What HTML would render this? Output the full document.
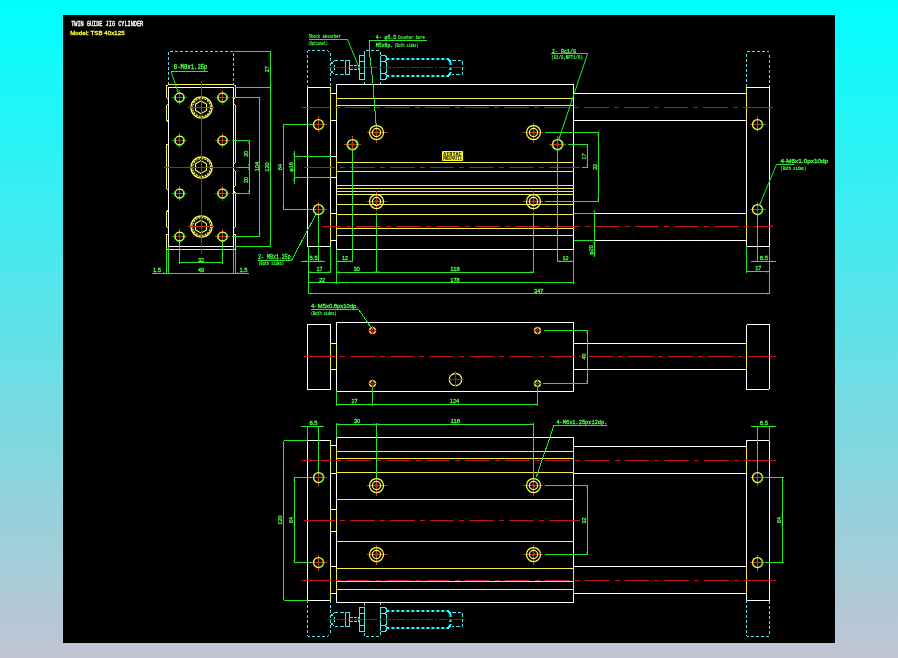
<!DOCTYPE html>
<html><head><meta charset="utf-8"><title>TWIN GUIDE JIG CYLINDER TSB 40x125</title>
<style>
html,body{margin:0;padding:0;}
body{width:898px;height:658px;overflow:hidden;background:linear-gradient(to bottom,#00ffff 0%,#c0c4d2 100%);position:relative;font-family:"Liberation Sans",sans-serif;}
#sheet{position:absolute;left:63px;top:15px;width:772px;height:628px;background:#000;}
svg{position:absolute;left:0;top:0;}
svg{will-change:transform;}
.k{shape-rendering:crispEdges;}
svg text{font-family:"Liberation Mono","Liberation Sans",monospace;}
svg text.n{font-family:"Liberation Sans",sans-serif;}
</style></head><body>
<div id="sheet"></div>
<svg width="898" height="658" viewBox="0 0 898 658">
<text x="71.2" y="26.0" fill="#ffffff" font-size="7.5" textLength="72.0" lengthAdjust="spacingAndGlyphs" stroke="#ffffff" stroke-width="0.4">TWIN GUIDE JIG CYLINDER</text>
<text x="70.2" y="35.0" fill="#ffff40" font-size="6.2" class="n" textLength="54.5" lengthAdjust="spacingAndGlyphs" stroke="#ffff40" stroke-width="0.3">Model: TSB 40x125</text>
<path class="k" d="M168.4 84.5 V51.3 H233.5 V84.5" fill="none" stroke="#58e4e4" stroke-width="1.0" stroke-dasharray="3 2"/>
<line x1="168.0" y1="84.5" x2="233.7" y2="84.5" stroke="#f0ee50" stroke-width="1.0" class="k"/>
<line x1="166.4" y1="249.5" x2="235.4" y2="249.5" stroke="#f0ee50" stroke-width="1.0" class="k"/>
<path class="k" d="M168.4 84.8 L166.4 86 V97.6 L168.4 98.8" fill="none" stroke="#f0ee50" stroke-width="1.0"/>
<path class="k" d="M168.4 104.1 L166.4 105.3 V120.3 L168.4 121.5" fill="none" stroke="#f0ee50" stroke-width="1.0"/>
<path class="k" d="M168.4 143.60000000000002 L166.4 144.8 V188.6 L168.4 189.79999999999998" fill="none" stroke="#f0ee50" stroke-width="1.0"/>
<path class="k" d="M168.4 210.4 L166.4 211.6 V226.6 L168.4 227.79999999999998" fill="none" stroke="#f0ee50" stroke-width="1.0"/>
<path class="k" d="M168.4 233.60000000000002 L166.4 234.8 V249.5" fill="none" stroke="#f0ee50" stroke-width="1.0"/>
<path class="k" d="M233.5 84.8 L235.4 86 V97.6 L233.5 98.8" fill="none" stroke="#f0ee50" stroke-width="1.0"/>
<path class="k" d="M233.5 104.1 L235.4 105.3 V162.8 L233.5 164.0" fill="none" stroke="#f0ee50" stroke-width="1.0"/>
<path class="k" d="M233.5 170.0 L235.4 171.2 V185.7 L233.5 186.89999999999998" fill="none" stroke="#f0ee50" stroke-width="1.0"/>
<path class="k" d="M233.5 191.3 L235.4 192.5 V226.6 L233.5 227.79999999999998" fill="none" stroke="#f0ee50" stroke-width="1.0"/>
<path class="k" d="M233.5 233.60000000000002 L235.4 234.8 V249.5" fill="none" stroke="#f0ee50" stroke-width="1.0"/>
<rect class="k" x="168.5" y="87.5" width="65.0" height="159.0" fill="none" stroke="#ffffff" stroke-width="1.0"/>
<line x1="201.5" y1="80.6" x2="201.5" y2="254.0" stroke="#c01420" stroke-width="1.0" class="k"/>
<line x1="164.0" y1="167.5" x2="238.0" y2="167.5" stroke="#c01420" stroke-width="1.0" class="k"/>
<line x1="172.0" y1="97.5" x2="187.0" y2="97.5" stroke="#b04a14" stroke-width="1.0" class="k"/>
<line x1="179.5" y1="90.0" x2="179.5" y2="105.0" stroke="#b04a14" stroke-width="1.0" class="k"/>
<circle cx="179.5" cy="97.5" r="4.4" fill="none" stroke="#ffff58" stroke-width="1.25"/>
<path d="M182.05 93.08 A5.1 5.1 0 1 1 175.08 94.95" fill="none" stroke="#28e628" stroke-width="1.0"/>
<line x1="215.0" y1="97.5" x2="230.0" y2="97.5" stroke="#b04a14" stroke-width="1.0" class="k"/>
<line x1="222.5" y1="90.0" x2="222.5" y2="105.0" stroke="#b04a14" stroke-width="1.0" class="k"/>
<circle cx="222.5" cy="97.5" r="4.4" fill="none" stroke="#ffff58" stroke-width="1.25"/>
<path d="M225.05 93.08 A5.1 5.1 0 1 1 218.08 94.95" fill="none" stroke="#28e628" stroke-width="1.0"/>
<line x1="172.0" y1="140.5" x2="187.0" y2="140.5" stroke="#b04a14" stroke-width="1.0" class="k"/>
<line x1="179.5" y1="132.9" x2="179.5" y2="147.9" stroke="#b04a14" stroke-width="1.0" class="k"/>
<circle cx="179.5" cy="140.5" r="4.4" fill="none" stroke="#ffff58" stroke-width="1.25"/>
<path d="M182.05 136.08 A5.1 5.1 0 1 1 175.08 137.95" fill="none" stroke="#28e628" stroke-width="1.0"/>
<line x1="215.0" y1="140.5" x2="230.0" y2="140.5" stroke="#b04a14" stroke-width="1.0" class="k"/>
<line x1="222.5" y1="132.9" x2="222.5" y2="147.9" stroke="#b04a14" stroke-width="1.0" class="k"/>
<circle cx="222.5" cy="140.5" r="4.4" fill="none" stroke="#ffff58" stroke-width="1.25"/>
<path d="M225.05 136.08 A5.1 5.1 0 1 1 218.08 137.95" fill="none" stroke="#28e628" stroke-width="1.0"/>
<line x1="172.0" y1="193.5" x2="187.0" y2="193.5" stroke="#b04a14" stroke-width="1.0" class="k"/>
<line x1="179.5" y1="186.1" x2="179.5" y2="201.1" stroke="#b04a14" stroke-width="1.0" class="k"/>
<circle cx="179.5" cy="193.5" r="4.4" fill="none" stroke="#ffff58" stroke-width="1.25"/>
<path d="M182.05 189.08 A5.1 5.1 0 1 1 175.08 190.95" fill="none" stroke="#28e628" stroke-width="1.0"/>
<line x1="215.0" y1="193.5" x2="230.0" y2="193.5" stroke="#b04a14" stroke-width="1.0" class="k"/>
<line x1="222.5" y1="186.1" x2="222.5" y2="201.1" stroke="#b04a14" stroke-width="1.0" class="k"/>
<circle cx="222.5" cy="193.5" r="4.4" fill="none" stroke="#ffff58" stroke-width="1.25"/>
<path d="M225.05 189.08 A5.1 5.1 0 1 1 218.08 190.95" fill="none" stroke="#28e628" stroke-width="1.0"/>
<line x1="172.0" y1="236.5" x2="187.0" y2="236.5" stroke="#b04a14" stroke-width="1.0" class="k"/>
<line x1="179.5" y1="229.0" x2="179.5" y2="244.0" stroke="#b04a14" stroke-width="1.0" class="k"/>
<circle cx="179.5" cy="236.5" r="4.4" fill="none" stroke="#ffff58" stroke-width="1.25"/>
<path d="M182.05 232.08 A5.1 5.1 0 1 1 175.08 233.95" fill="none" stroke="#28e628" stroke-width="1.0"/>
<line x1="215.0" y1="236.5" x2="230.0" y2="236.5" stroke="#b04a14" stroke-width="1.0" class="k"/>
<line x1="222.5" y1="229.0" x2="222.5" y2="244.0" stroke="#b04a14" stroke-width="1.0" class="k"/>
<circle cx="222.5" cy="236.5" r="4.4" fill="none" stroke="#ffff58" stroke-width="1.25"/>
<path d="M225.05 232.08 A5.1 5.1 0 1 1 218.08 233.95" fill="none" stroke="#28e628" stroke-width="1.0"/>
<circle cx="201.5" cy="107.5" r="10.6" fill="none" stroke="#ffff58" stroke-width="1.25"/>
<circle cx="201.5" cy="107.5" r="9.0" fill="none" stroke="#ffff58" stroke-width="1.25" stroke-dasharray="2 1"/>
<polygon points="201.0,113.7 195.5,110.5 195.5,104.1 201.0,100.9 206.5,104.1 206.5,110.5" fill="none" stroke="#ffff58" stroke-width="1.1"/>
<line x1="188.0" y1="107.5" x2="214.0" y2="107.5" stroke="#b83018" stroke-width="1.0" class="k"/>
<line x1="201.5" y1="94.3" x2="201.5" y2="120.3" stroke="#b83018" stroke-width="1.0" class="k"/>
<circle cx="201.5" cy="167.5" r="10.6" fill="none" stroke="#ffff58" stroke-width="1.25"/>
<circle cx="201.5" cy="167.5" r="9.0" fill="none" stroke="#ffff58" stroke-width="1.25" stroke-dasharray="2 1"/>
<polygon points="201.0,173.4 195.5,170.2 195.5,163.8 201.0,160.6 206.5,163.8 206.5,170.2" fill="none" stroke="#ffff58" stroke-width="1.1"/>
<line x1="188.0" y1="167.5" x2="214.0" y2="167.5" stroke="#b83018" stroke-width="1.0" class="k"/>
<line x1="201.5" y1="154.0" x2="201.5" y2="180.0" stroke="#b83018" stroke-width="1.0" class="k"/>
<circle cx="201.5" cy="226.5" r="10.6" fill="none" stroke="#ffff58" stroke-width="1.25"/>
<circle cx="201.5" cy="226.5" r="9.0" fill="none" stroke="#ffff58" stroke-width="1.25" stroke-dasharray="2 1"/>
<polygon points="201.0,233.1 195.5,229.9 195.5,223.5 201.0,220.3 206.5,223.5 206.5,229.9" fill="none" stroke="#ffff58" stroke-width="1.1"/>
<line x1="188.0" y1="226.5" x2="214.0" y2="226.5" stroke="#b83018" stroke-width="1.0" class="k"/>
<line x1="201.5" y1="213.7" x2="201.5" y2="239.7" stroke="#b83018" stroke-width="1.0" class="k"/>
<text x="173.8" y="69.4" fill="#48ff48" font-size="6.8" textLength="33.7" lengthAdjust="spacingAndGlyphs" stroke="#48ff48" stroke-width="0.3">8-M8x1.25p</text>
<line x1="171.0" y1="71.5" x2="207.8" y2="71.5" stroke="#28e628" stroke-width="1.0" class="k"/>
<line x1="171.0" y1="71.4" x2="178.2" y2="92.5" stroke="#28e628" stroke-width="1.0"/>
<polygon points="178.2,92.5 176.4,90.0 178.1,89.4" fill="#28e628"/>
<line x1="233.5" y1="51.5" x2="271.0" y2="51.5" stroke="#28e628" stroke-width="1.0" class="k"/>
<line x1="235.0" y1="87.5" x2="271.0" y2="87.5" stroke="#28e628" stroke-width="1.0" class="k"/>
<line x1="235.0" y1="246.5" x2="271.0" y2="246.5" stroke="#28e628" stroke-width="1.0" class="k"/>
<line x1="270.5" y1="51.3" x2="270.5" y2="87.2" stroke="#28e628" stroke-width="1.0" class="k"/>
<polygon points="270.5,51.3 271.4,54.3 269.6,54.3" fill="#28e628"/>
<polygon points="270.5,87.2 269.6,84.2 271.4,84.2" fill="#28e628"/>
<text x="269.3" y="69.2" fill="#48ff48" font-size="6.1" class="n" text-anchor="middle" textLength="6.1" lengthAdjust="spacingAndGlyphs" transform="rotate(-90 269.3 69.2)" stroke="#48ff48" stroke-width="0.3">27</text>
<line x1="270.5" y1="87.2" x2="270.5" y2="246.4" stroke="#28e628" stroke-width="1.0" class="k"/>
<polygon points="270.5,87.2 271.4,90.2 269.6,90.2" fill="#28e628"/>
<polygon points="270.5,246.4 269.6,243.4 271.4,243.4" fill="#28e628"/>
<text x="268.6" y="167.0" fill="#48ff48" font-size="6.1" class="n" text-anchor="middle" textLength="9.4" lengthAdjust="spacingAndGlyphs" transform="rotate(-90 268.6 167.0)" stroke="#48ff48" stroke-width="0.3">120</text>
<line x1="231.5" y1="97.5" x2="259.6" y2="97.5" stroke="#28e628" stroke-width="1.0" class="k"/>
<line x1="231.5" y1="236.5" x2="259.6" y2="236.5" stroke="#28e628" stroke-width="1.0" class="k"/>
<line x1="259.5" y1="97.5" x2="259.5" y2="236.5" stroke="#28e628" stroke-width="1.0" class="k"/>
<polygon points="259.6,97.5 260.5,100.5 258.7,100.5" fill="#28e628"/>
<polygon points="259.6,236.5 258.7,233.5 260.5,233.5" fill="#28e628"/>
<text x="259.0" y="166.5" fill="#48ff48" font-size="6.1" class="n" text-anchor="middle" textLength="9.4" lengthAdjust="spacingAndGlyphs" transform="rotate(-90 259.0 166.5)" stroke="#48ff48" stroke-width="0.3">104</text>
<line x1="231.5" y1="140.5" x2="249.0" y2="140.5" stroke="#28e628" stroke-width="1.0" class="k"/>
<line x1="231.5" y1="193.5" x2="249.0" y2="193.5" stroke="#28e628" stroke-width="1.0" class="k"/>
<line x1="238.0" y1="167.5" x2="249.6" y2="167.5" stroke="#28e628" stroke-width="1.0" class="k"/>
<line x1="249.5" y1="140.4" x2="249.5" y2="193.6" stroke="#28e628" stroke-width="1.0" class="k"/>
<polygon points="249.0,140.4 249.9,143.4 248.1,143.4" fill="#28e628"/>
<polygon points="249.0,167.0 248.1,164.0 249.9,164.0" fill="#28e628"/>
<polygon points="249.0,167.0 249.9,170.0 248.1,170.0" fill="#28e628"/>
<polygon points="249.0,193.6 248.1,190.6 249.9,190.6" fill="#28e628"/>
<text x="247.6" y="153.8" fill="#48ff48" font-size="6.1" class="n" text-anchor="middle" textLength="6.1" lengthAdjust="spacingAndGlyphs" transform="rotate(-90 247.6 153.8)" stroke="#48ff48" stroke-width="0.3">20</text>
<text x="247.6" y="180.0" fill="#48ff48" font-size="6.1" class="n" text-anchor="middle" textLength="6.1" lengthAdjust="spacingAndGlyphs" transform="rotate(-90 247.6 180.0)" stroke="#48ff48" stroke-width="0.3">20</text>
<line x1="166.5" y1="250.0" x2="166.5" y2="274.0" stroke="#28e628" stroke-width="1.0" class="k"/>
<line x1="168.5" y1="247.0" x2="168.5" y2="274.0" stroke="#28e628" stroke-width="1.0" class="k"/>
<line x1="233.5" y1="247.0" x2="233.5" y2="274.0" stroke="#28e628" stroke-width="1.0" class="k"/>
<line x1="235.5" y1="250.0" x2="235.5" y2="274.0" stroke="#28e628" stroke-width="1.0" class="k"/>
<line x1="152.0" y1="273.5" x2="249.0" y2="273.5" stroke="#28e628" stroke-width="1.0" class="k"/>
<polygon points="166.4,273.2 163.4,274.1 163.4,272.3" fill="#28e628"/>
<polygon points="235.4,273.2 238.4,272.3 238.4,274.1" fill="#28e628"/>
<text x="157.0" y="271.8" fill="#48ff48" font-size="6.1" class="n" text-anchor="middle" textLength="8.2" lengthAdjust="spacingAndGlyphs" stroke="#48ff48" stroke-width="0.3">1.5</text>
<text x="201.0" y="271.8" fill="#48ff48" font-size="6.1" class="n" text-anchor="middle" textLength="6.1" lengthAdjust="spacingAndGlyphs" stroke="#48ff48" stroke-width="0.3">49</text>
<text x="243.5" y="271.8" fill="#48ff48" font-size="6.1" class="n" text-anchor="middle" textLength="8.2" lengthAdjust="spacingAndGlyphs" stroke="#48ff48" stroke-width="0.3">1.5</text>
<line x1="179.5" y1="242.0" x2="179.5" y2="263.5" stroke="#28e628" stroke-width="1.0" class="k"/>
<line x1="222.5" y1="242.0" x2="222.5" y2="263.5" stroke="#28e628" stroke-width="1.0" class="k"/>
<line x1="179.5" y1="262.5" x2="222.5" y2="262.5" stroke="#28e628" stroke-width="1.0" class="k"/>
<polygon points="179.5,262.7 182.5,261.8 182.5,263.6" fill="#28e628"/>
<polygon points="222.5,262.7 219.5,263.6 219.5,261.8" fill="#28e628"/>
<text x="201.0" y="261.5" fill="#48ff48" font-size="6.1" class="n" text-anchor="middle" textLength="6.1" lengthAdjust="spacingAndGlyphs" stroke="#48ff48" stroke-width="0.3">32</text>
<rect class="k" x="307.5" y="87.5" width="23.0" height="159.0" fill="none" stroke="#ffffff" stroke-width="1.0"/>
<line x1="330.5" y1="88.0" x2="330.5" y2="246.0" stroke="#f0ee50" stroke-width="1.0" class="k"/>
<rect class="k" x="336.5" y="84.5" width="237.0" height="165.0" fill="none" stroke="#ffffff" stroke-width="1.0"/>
<line x1="336.5" y1="94.0" x2="336.5" y2="240.0" stroke="#f0ee50" stroke-width="1.0" class="k"/>
<line x1="336.5" y1="98.5" x2="573.5" y2="98.5" stroke="#f0ee50" stroke-width="1.0" class="k"/>
<line x1="336.5" y1="105.5" x2="573.5" y2="105.5" stroke="#f0ee50" stroke-width="1.0" class="k"/>
<line x1="336.5" y1="162.5" x2="573.5" y2="162.5" stroke="#f0ee50" stroke-width="1.0" class="k"/>
<line x1="336.5" y1="171.5" x2="573.5" y2="171.5" stroke="#f0ee50" stroke-width="1.0" class="k"/>
<line x1="336.5" y1="185.5" x2="573.5" y2="185.5" stroke="#f0ee50" stroke-width="1.0" class="k"/>
<line x1="336.5" y1="188.5" x2="573.5" y2="188.5" stroke="#f0ee50" stroke-width="1.0" class="k"/>
<line x1="336.5" y1="191.5" x2="573.5" y2="191.5" stroke="#f0ee50" stroke-width="1.0" class="k"/>
<line x1="336.5" y1="194.5" x2="573.5" y2="194.5" stroke="#f0ee50" stroke-width="1.0" class="k"/>
<line x1="336.5" y1="204.5" x2="573.5" y2="204.5" stroke="#f0ee50" stroke-width="1.0" class="k"/>
<line x1="336.5" y1="214.5" x2="573.5" y2="214.5" stroke="#f0ee50" stroke-width="1.0" class="k"/>
<line x1="336.5" y1="228.5" x2="573.5" y2="228.5" stroke="#f0ee50" stroke-width="1.0" class="k"/>
<line x1="336.5" y1="235.5" x2="573.5" y2="235.5" stroke="#f0ee50" stroke-width="1.0" class="k"/>
<rect class="k" x="330.5" y="120.5" width="6.0" height="36.0" fill="none" stroke="#ffffff" stroke-width="1.0"/>
<rect class="k" x="330.5" y="177.5" width="6.0" height="36.0" fill="none" stroke="#ffffff" stroke-width="1.0"/>
<line x1="330.6" y1="93.5" x2="336.5" y2="93.5" stroke="#ffffff" stroke-width="1.0" class="k"/>
<line x1="330.6" y1="240.5" x2="336.5" y2="240.5" stroke="#ffffff" stroke-width="1.0" class="k"/>
<line x1="573.5" y1="93.5" x2="746.4" y2="93.5" stroke="#ffffff" stroke-width="1.0" class="k"/>
<line x1="573.5" y1="120.5" x2="746.4" y2="120.5" stroke="#ffffff" stroke-width="1.0" class="k"/>
<line x1="573.5" y1="213.5" x2="746.4" y2="213.5" stroke="#ffffff" stroke-width="1.0" class="k"/>
<line x1="573.5" y1="240.5" x2="746.4" y2="240.5" stroke="#ffffff" stroke-width="1.0" class="k"/>
<rect class="k" x="746.5" y="87.5" width="23.0" height="159.0" fill="none" stroke="#ffffff" stroke-width="1.0"/>
<line x1="746.5" y1="88.0" x2="746.5" y2="120.4" stroke="#f0ee50" stroke-width="1.0" class="k"/>
<line x1="746.5" y1="213.5" x2="746.5" y2="240.4" stroke="#f0ee50" stroke-width="1.0" class="k"/>
<path class="k" d="M307.6 87.5 V52.5 Q307.6 50.5 309.6 50.5 H327.6 L330.6 53.5 V87.5" fill="none" stroke="#58e4e4" stroke-width="1.0" stroke-dasharray="3 2"/>
<path class="k" d="M746.4 87.2 V53.4 Q746.4 51.4 748.4 51.4 H767.8 Q769.8 51.4 769.8 53.4 V87.2" fill="none" stroke="#58e4e4" stroke-width="1.0" stroke-dasharray="3 2"/>
<path class="k" d="M301 107.5 H330 M335 107.5 H340 M345 107.5 H370 M375 107.5 H380 M385 107.5 H410 M415 107.5 H420 M425 107.5 H450 M455 107.5 H460 M465 107.5 H489 M494 107.5 H499 M504 107.5 H529 M534 107.5 H539 M544 107.5 H569 M574 107.5 H579 M584 107.5 H609 M614 107.5 H619 M624 107.5 H649 M654 107.5 H659 M664 107.5 H688 M693 107.5 H698 M703 107.5 H728 M733 107.5 H738 M743 107.5 H773" stroke="#c01420" stroke-width="1" fill="none"/>
<path class="k" d="M304 167.5 H335 M340 167.5 H345 M350 167.5 H375 M380 167.5 H385 M390 167.5 H415 M420 167.5 H425 M430 167.5 H454 M459 167.5 H464 M469 167.5 H494 M499 167.5 H504 M509 167.5 H534 M539 167.5 H544 M549 167.5 H580" stroke="#c01420" stroke-width="1" fill="none"/>
<path class="k" d="M322 226.5 H341 M346 226.5 H351 M356 226.5 H381 M386 226.5 H391 M396 226.5 H421 M426 226.5 H431 M436 226.5 H460 M465 226.5 H470 M475 226.5 H500 M505 226.5 H510 M515 226.5 H540 M545 226.5 H550 M555 226.5 H580 M585 226.5 H590 M595 226.5 H620 M625 226.5 H630 M635 226.5 H659 M664 226.5 H669 M674 226.5 H699 M704 226.5 H709 M714 226.5 H739 M744 226.5 H749 M754 226.5 H773" stroke="#c01420" stroke-width="1" fill="none"/>
<path class="k" d="M364.5 84.5 V51.9 L366 50.4 H379 L380.5 51.9 V84.5" fill="none" stroke="#58e4e4" stroke-width="1.0" stroke-dasharray="3 2"/>
<line x1="334.5" y1="60.5" x2="345.7" y2="60.5" stroke="#58e4e4" stroke-width="1.0" stroke-dasharray="3.5 2" class="k"/>
<line x1="334.5" y1="74.5" x2="345.7" y2="74.5" stroke="#58e4e4" stroke-width="1.0" stroke-dasharray="3.5 2" class="k"/>
<path class="k" d="M334.5 60.5 L331 64.0 M334.5 74.5 L331 71.0 M331 62.0 L333 64.0 M331 73.0 L333 71.0" fill="none" stroke="#58e4e4" stroke-width="1.0"/>
<line x1="334.5" y1="65.0" x2="334.5" y2="70.0" stroke="#58e4e4" stroke-width="1.0" class="k"/>
<rect class="k" x="345.5" y="60.5" width="4.0" height="14.0" fill="none" stroke="#58e4e4" stroke-width="1.0"/>
<line x1="349.8" y1="65.5" x2="358.2" y2="65.5" stroke="#58e4e4" stroke-width="1.0" stroke-dasharray="3 1.5" class="k"/>
<line x1="349.8" y1="69.5" x2="358.2" y2="69.5" stroke="#58e4e4" stroke-width="1.0" stroke-dasharray="3 1.5" class="k"/>
<rect class="k" x="359.5" y="55.5" width="5.0" height="24.0" fill="none" stroke="#58e4e4" stroke-width="1.0"/>
<line x1="359.5" y1="61.5" x2="364.9" y2="61.5" stroke="#58e4e4" stroke-width="1.0" class="k"/>
<line x1="359.5" y1="73.5" x2="364.9" y2="73.5" stroke="#58e4e4" stroke-width="1.0" class="k"/>
<path class="k" d="M359.5 64.5 L357.8 67.5 L359.5 70.5" fill="none" stroke="#58e4e4" stroke-width="1.0"/>
<path class="k" d="M385.0 55.5 H381.5 L380.5 56.5 V78.5 L381.5 79.5 H385.0 L386 78.5 V74.5 L385 73.5 L386.6 72.0 V69.0 L385.4 67.5 L386.6 66.0 V63.0 L385 61.5 L386 60.5 V56.5 Z M380.5 61.5 H385 M380.5 73.5 H385" fill="none" stroke="#58e4e4" stroke-width="1.0"/>
<line x1="386.4" y1="59.0" x2="449" y2="59.0" stroke="#20ffff" stroke-width="2" stroke-dasharray="3 2"/>
<line x1="386.4" y1="76.0" x2="449" y2="76.0" stroke="#20ffff" stroke-width="2" stroke-dasharray="3 2"/>
<path class="k" d="M448.2 59.1 L450.6 61.5 M448.2 75.9 L450.6 73.5" fill="none" stroke="#20ffff" stroke-width="1.6"/>
<line x1="450.5" y1="62.0" x2="450.5" y2="73.0" stroke="#20ffff" stroke-width="2" stroke-dasharray="3 2"/>
<path class="k" d="M452 60.5 H462.5 V74.5 H452" fill="none" stroke="#58e4e4" stroke-width="1.0" stroke-dasharray="3.5 2"/>
<line x1="326.7" y1="67.5" x2="466.0" y2="67.5" stroke="#9c1420" stroke-width="1.0" stroke-dasharray="8 2 2 2" class="k"/>
<line x1="366.6" y1="132.5" x2="386.6" y2="132.5" stroke="#b04a14" stroke-width="1.0" class="k"/>
<line x1="376.5" y1="122.6" x2="376.5" y2="142.6" stroke="#b04a14" stroke-width="1.0" class="k"/>
<circle cx="376.5" cy="132.5" r="7.0" fill="none" stroke="#ffff58" stroke-width="1.25"/>
<circle cx="376.5" cy="132.5" r="4.1" fill="none" stroke="#ffff58" stroke-width="1.25"/>
<circle cx="376.5" cy="132.5" r="1.1" fill="none" stroke="#d81828" stroke-width="1.1"/>
<line x1="366.6" y1="201.5" x2="386.6" y2="201.5" stroke="#b04a14" stroke-width="1.0" class="k"/>
<line x1="376.5" y1="191.3" x2="376.5" y2="211.3" stroke="#b04a14" stroke-width="1.0" class="k"/>
<circle cx="376.5" cy="201.5" r="7.0" fill="none" stroke="#ffff58" stroke-width="1.25"/>
<circle cx="376.5" cy="201.5" r="4.1" fill="none" stroke="#ffff58" stroke-width="1.25"/>
<circle cx="376.5" cy="201.5" r="1.1" fill="none" stroke="#d81828" stroke-width="1.1"/>
<line x1="523.4" y1="132.5" x2="543.4" y2="132.5" stroke="#b04a14" stroke-width="1.0" class="k"/>
<line x1="533.5" y1="122.6" x2="533.5" y2="142.6" stroke="#b04a14" stroke-width="1.0" class="k"/>
<circle cx="533.5" cy="132.5" r="7.0" fill="none" stroke="#ffff58" stroke-width="1.25"/>
<circle cx="533.5" cy="132.5" r="4.1" fill="none" stroke="#ffff58" stroke-width="1.25"/>
<circle cx="533.5" cy="132.5" r="1.1" fill="none" stroke="#d81828" stroke-width="1.1"/>
<line x1="523.4" y1="201.5" x2="543.4" y2="201.5" stroke="#b04a14" stroke-width="1.0" class="k"/>
<line x1="533.5" y1="191.3" x2="533.5" y2="211.3" stroke="#b04a14" stroke-width="1.0" class="k"/>
<circle cx="533.5" cy="201.5" r="7.0" fill="none" stroke="#ffff58" stroke-width="1.25"/>
<circle cx="533.5" cy="201.5" r="4.1" fill="none" stroke="#ffff58" stroke-width="1.25"/>
<circle cx="533.5" cy="201.5" r="1.1" fill="none" stroke="#d81828" stroke-width="1.1"/>
<line x1="344.2" y1="144.5" x2="361.4" y2="144.5" stroke="#b04a14" stroke-width="1.0" class="k"/>
<line x1="352.5" y1="136.0" x2="352.5" y2="153.2" stroke="#b04a14" stroke-width="1.0" class="k"/>
<circle cx="352.5" cy="144.5" r="5.0" fill="none" stroke="#ffff58" stroke-width="1.25"/>
<path d="M355.30 139.65 A5.6 5.6 0 1 1 346.99 143.53" fill="none" stroke="#28e628" stroke-width="1.0"/>
<circle cx="352.5" cy="144.5" r="1.1" fill="none" stroke="#d81828" stroke-width="1.1"/>
<line x1="548.9" y1="144.5" x2="566.1" y2="144.5" stroke="#b04a14" stroke-width="1.0" class="k"/>
<line x1="557.5" y1="136.0" x2="557.5" y2="153.2" stroke="#b04a14" stroke-width="1.0" class="k"/>
<circle cx="557.5" cy="144.5" r="5.0" fill="none" stroke="#ffff58" stroke-width="1.25"/>
<path d="M560.30 139.65 A5.6 5.6 0 1 1 551.99 143.53" fill="none" stroke="#28e628" stroke-width="1.0"/>
<circle cx="557.5" cy="144.5" r="1.1" fill="none" stroke="#d81828" stroke-width="1.1"/>
<line x1="310.7" y1="124.5" x2="326.7" y2="124.5" stroke="#b04a14" stroke-width="1.0" class="k"/>
<line x1="318.5" y1="116.2" x2="318.5" y2="132.2" stroke="#b04a14" stroke-width="1.0" class="k"/>
<circle cx="318.5" cy="124.5" r="5.0" fill="none" stroke="#ffff58" stroke-width="1.25"/>
<path d="M323.26 121.75 A5.5 5.5 0 0 1 319.46 129.92" fill="none" stroke="#30d830" stroke-width="1"/>
<line x1="749.7" y1="124.5" x2="765.7" y2="124.5" stroke="#b04a14" stroke-width="1.0" class="k"/>
<line x1="757.5" y1="116.2" x2="757.5" y2="132.2" stroke="#b04a14" stroke-width="1.0" class="k"/>
<circle cx="757.5" cy="124.5" r="5.0" fill="none" stroke="#ffff58" stroke-width="1.25"/>
<path d="M762.26 121.75 A5.5 5.5 0 0 1 758.46 129.92" fill="none" stroke="#30d830" stroke-width="1"/>
<line x1="310.7" y1="209.5" x2="326.7" y2="209.5" stroke="#b04a14" stroke-width="1.0" class="k"/>
<line x1="318.5" y1="201.5" x2="318.5" y2="217.5" stroke="#b04a14" stroke-width="1.0" class="k"/>
<circle cx="318.5" cy="209.5" r="5.0" fill="none" stroke="#ffff58" stroke-width="1.25"/>
<path d="M323.26 206.75 A5.5 5.5 0 0 1 319.46 214.92" fill="none" stroke="#30d830" stroke-width="1"/>
<line x1="749.7" y1="209.5" x2="765.7" y2="209.5" stroke="#b04a14" stroke-width="1.0" class="k"/>
<line x1="757.5" y1="201.5" x2="757.5" y2="217.5" stroke="#b04a14" stroke-width="1.0" class="k"/>
<circle cx="757.5" cy="209.5" r="5.0" fill="none" stroke="#ffff58" stroke-width="1.25"/>
<path d="M762.26 206.75 A5.5 5.5 0 0 1 758.46 214.92" fill="none" stroke="#30d830" stroke-width="1"/>
<rect x="442" y="150.9" width="21.1" height="10.1" rx="1" fill="#ffff33"/>
<text x="443.2" y="155.6" fill="#000" font-size="4.6" textLength="18.5" lengthAdjust="spacingAndGlyphs" font-weight="bold">AIRTAC</text>
<text x="443.2" y="160.0" fill="#000" font-size="4.8" textLength="18.5" lengthAdjust="spacingAndGlyphs" font-weight="bold">PNEUMATIC</text>
<text x="308.7" y="38.0" fill="#48ff48" font-size="4.9" textLength="32.3" lengthAdjust="spacingAndGlyphs" stroke="#48ff48" stroke-width="0.2">Shock absorber</text>
<line x1="308.7" y1="39.5" x2="347.5" y2="39.5" stroke="#28e628" stroke-width="1.0" class="k"/>
<line x1="347.5" y1="39.3" x2="358.8" y2="67.0" stroke="#28e628" stroke-width="1.0"/>
<text x="308.2" y="44.8" fill="#48ff48" font-size="4.9" textLength="19.5" lengthAdjust="spacingAndGlyphs" stroke="#48ff48" stroke-width="0.2">(Optional)</text>
<text x="375.8" y="39.2" fill="#48ff48" font-size="6.2" textLength="20.5" lengthAdjust="spacingAndGlyphs" stroke="#48ff48" stroke-width="0.3">4- φ5.5</text>
<text x="398.0" y="39.0" fill="#48ff48" font-size="4.9" textLength="26.7" lengthAdjust="spacingAndGlyphs" stroke="#48ff48" stroke-width="0.2">Counter bore</text>
<path class="k" d="M426.7 40.2 H369.3 V51.2 L372.6 80 L376.2 125.5" fill="none" stroke="#28e628" stroke-width="1.0"/>
<polygon points="376.2,125.8 375.1,122.9 376.9,122.7" fill="#28e628"/>
<text x="375.8" y="47.2" fill="#48ff48" font-size="5.6" textLength="17.5" lengthAdjust="spacingAndGlyphs" stroke="#48ff48" stroke-width="0.3">M5x6p.</text>
<text x="394.6" y="47.0" fill="#48ff48" font-size="4.9" textLength="24.0" lengthAdjust="spacingAndGlyphs" stroke="#48ff48" stroke-width="0.2">(Both sides)</text>
<text x="552.1" y="52.8" fill="#48ff48" font-size="5.8" textLength="24.0" lengthAdjust="spacingAndGlyphs" stroke="#48ff48" stroke-width="0.3">2- Rc1/8</text>
<line x1="551.0" y1="53.5" x2="587.6" y2="53.5" stroke="#28e628" stroke-width="1.0" class="k"/>
<line x1="587.6" y1="53.7" x2="558.6" y2="140.0" stroke="#28e628" stroke-width="1.0"/>
<polygon points="558.6,140.0 558.7,136.9 560.4,137.4" fill="#28e628"/>
<text x="551.2" y="58.6" fill="#48ff48" font-size="5" textLength="31.7" lengthAdjust="spacingAndGlyphs" stroke="#48ff48" stroke-width="0.22">(G1/8,NPT1/8)</text>
<text x="780.6" y="163.0" fill="#48ff48" font-size="5.4" class="n" textLength="47.5" lengthAdjust="spacingAndGlyphs" stroke="#48ff48" stroke-width="0.3">4-M6x1.0px10dp</text>
<path d="M794 164.5 H776.5 L759.8 204.5" fill="none" stroke="#28e628" stroke-width="1.0"/>
<polygon points="759.6,205.0 759.9,201.9 761.6,202.6" fill="#28e628"/>
<text x="780.6" y="170.0" fill="#48ff48" font-size="4.8" textLength="25.4" lengthAdjust="spacingAndGlyphs" stroke="#48ff48" stroke-width="0.22">(Both sides)</text>
<text x="258.0" y="259.0" fill="#48ff48" font-size="6.6" textLength="32.8" lengthAdjust="spacingAndGlyphs" stroke="#48ff48" stroke-width="0.3">2- M8x1.25p</text>
<path class="k" d="M258 260.5 H291.5 L316.4 213.4" fill="none" stroke="#28e628" stroke-width="1.0"/>
<polygon points="316.6,213.0 316.0,216.1 314.4,215.2" fill="#28e628"/>
<text x="258.5" y="265.4" fill="#48ff48" font-size="4.8" textLength="25.5" lengthAdjust="spacingAndGlyphs" stroke="#48ff48" stroke-width="0.22">(Both sides)</text>
<line x1="283.4" y1="124.5" x2="313.0" y2="124.5" stroke="#28e628" stroke-width="1.0" class="k"/>
<line x1="283.4" y1="209.5" x2="313.0" y2="209.5" stroke="#28e628" stroke-width="1.0" class="k"/>
<line x1="283.5" y1="124.2" x2="283.5" y2="209.5" stroke="#28e628" stroke-width="1.0" class="k"/>
<polygon points="283.4,124.2 284.3,127.2 282.5,127.2" fill="#28e628"/>
<polygon points="283.4,209.5 282.5,206.5 284.3,206.5" fill="#28e628"/>
<text x="282.0" y="167.0" fill="#48ff48" font-size="6.1" class="n" text-anchor="middle" textLength="6.1" lengthAdjust="spacingAndGlyphs" transform="rotate(-90 282.0 167.0)" stroke="#48ff48" stroke-width="0.3">64</text>
<line x1="294.0" y1="156.5" x2="330.6" y2="156.5" stroke="#28e628" stroke-width="1.0" class="k"/>
<line x1="294.0" y1="177.5" x2="330.6" y2="177.5" stroke="#28e628" stroke-width="1.0" class="k"/>
<line x1="294.5" y1="150.5" x2="294.5" y2="183.5" stroke="#28e628" stroke-width="1.0" class="k"/>
<polygon points="294.0,156.5 293.1,153.5 294.9,153.5" fill="#28e628"/>
<polygon points="294.0,177.5 294.9,180.5 293.1,180.5" fill="#28e628"/>
<text x="292.7" y="167.0" fill="#48ff48" font-size="6.1" class="n" text-anchor="middle" textLength="9.4" lengthAdjust="spacingAndGlyphs" transform="rotate(-90 292.7 167.0)" stroke="#48ff48" stroke-width="0.3">φ16</text>
<line x1="545.0" y1="132.5" x2="598.8" y2="132.5" stroke="#28e628" stroke-width="1.0" class="k"/>
<line x1="545.0" y1="201.5" x2="598.8" y2="201.5" stroke="#28e628" stroke-width="1.0" class="k"/>
<line x1="598.5" y1="132.6" x2="598.5" y2="201.3" stroke="#28e628" stroke-width="1.0" class="k"/>
<polygon points="598.2,132.6 599.1,135.6 597.3,135.6" fill="#28e628"/>
<polygon points="598.2,201.3 597.3,198.3 599.1,198.3" fill="#28e628"/>
<text x="596.8" y="167.0" fill="#48ff48" font-size="6.1" class="n" text-anchor="middle" textLength="6.1" lengthAdjust="spacingAndGlyphs" transform="rotate(-90 596.8 167.0)" stroke="#48ff48" stroke-width="0.3">32</text>
<line x1="567.5" y1="144.5" x2="588.0" y2="144.5" stroke="#28e628" stroke-width="1.0" class="k"/>
<line x1="581.5" y1="167.5" x2="588.0" y2="167.5" stroke="#28e628" stroke-width="1.0" class="k"/>
<line x1="587.5" y1="144.6" x2="587.5" y2="167.3" stroke="#28e628" stroke-width="1.0" class="k"/>
<polygon points="587.3,144.6 588.2,147.6 586.4,147.6" fill="#28e628"/>
<polygon points="587.3,167.3 586.4,164.3 588.2,164.3" fill="#28e628"/>
<text x="585.9" y="156.5" fill="#48ff48" font-size="6.1" class="n" text-anchor="middle" textLength="6.1" lengthAdjust="spacingAndGlyphs" transform="rotate(-90 585.9 156.5)" stroke="#48ff48" stroke-width="0.3">17</text>
<line x1="594.5" y1="213.5" x2="594.5" y2="257.0" stroke="#28e628" stroke-width="1.0" class="k"/>
<polygon points="594.3,213.5 593.4,210.5 595.2,210.5" fill="#28e628"/>
<polygon points="594.3,240.4 595.2,243.4 593.4,243.4" fill="#28e628"/>
<line x1="573.5" y1="213.5" x2="594.3" y2="213.5" stroke="#28e628" stroke-width="1.0" class="k"/>
<line x1="573.5" y1="240.5" x2="594.3" y2="240.5" stroke="#28e628" stroke-width="1.0" class="k"/>
<text x="593.0" y="250.0" fill="#48ff48" font-size="6.1" class="n" text-anchor="middle" textLength="9.4" lengthAdjust="spacingAndGlyphs" transform="rotate(-90 593.0 250.0)" stroke="#48ff48" stroke-width="0.3">φ20</text>
<line x1="308.5" y1="246.4" x2="308.5" y2="294.0" stroke="#28e628" stroke-width="1.0" class="k"/>
<line x1="318.5" y1="215.0" x2="318.5" y2="262.0" stroke="#28e628" stroke-width="1.0" class="k"/>
<line x1="330.5" y1="246.4" x2="330.5" y2="273.0" stroke="#28e628" stroke-width="1.0" class="k"/>
<line x1="336.5" y1="249.5" x2="336.5" y2="283.5" stroke="#28e628" stroke-width="1.0" class="k"/>
<line x1="352.5" y1="150.5" x2="352.5" y2="262.0" stroke="#28e628" stroke-width="1.0" class="k"/>
<line x1="376.5" y1="213.0" x2="376.5" y2="273.0" stroke="#28e628" stroke-width="1.0" class="k"/>
<line x1="533.5" y1="213.0" x2="533.5" y2="273.0" stroke="#28e628" stroke-width="1.0" class="k"/>
<line x1="557.5" y1="150.5" x2="557.5" y2="262.0" stroke="#28e628" stroke-width="1.0" class="k"/>
<line x1="573.5" y1="249.5" x2="573.5" y2="283.5" stroke="#28e628" stroke-width="1.0" class="k"/>
<line x1="301.0" y1="261.5" x2="325.0" y2="261.5" stroke="#28e628" stroke-width="1.0" class="k"/>
<polygon points="308.2,261.2 305.2,262.1 305.2,260.3" fill="#28e628"/>
<polygon points="318.6,261.2 321.6,260.3 321.6,262.1" fill="#28e628"/>
<text x="313.6" y="260.2" fill="#48ff48" font-size="6.1" class="n" text-anchor="middle" textLength="8.2" lengthAdjust="spacingAndGlyphs" stroke="#48ff48" stroke-width="0.3">5.5</text>
<line x1="308.2" y1="272.5" x2="330.7" y2="272.5" stroke="#28e628" stroke-width="1.0" class="k"/>
<polygon points="308.2,272.1 311.2,271.2 311.2,273.0" fill="#28e628"/>
<polygon points="330.7,272.1 327.7,273.0 327.7,271.2" fill="#28e628"/>
<text x="319.5" y="270.9" fill="#48ff48" font-size="6.1" class="n" text-anchor="middle" textLength="6.1" lengthAdjust="spacingAndGlyphs" stroke="#48ff48" stroke-width="0.3">17</text>
<line x1="308.2" y1="282.5" x2="573.5" y2="282.5" stroke="#28e628" stroke-width="1.0" class="k"/>
<polygon points="308.2,282.6 311.2,281.7 311.2,283.5" fill="#28e628"/>
<polygon points="336.6,282.6 333.6,283.5 333.6,281.7" fill="#28e628"/>
<polygon points="336.6,282.6 339.6,281.7 339.6,283.5" fill="#28e628"/>
<polygon points="573.5,282.6 570.5,283.5 570.5,281.7" fill="#28e628"/>
<text x="322.0" y="281.6" fill="#48ff48" font-size="6.1" class="n" text-anchor="middle" textLength="6.1" lengthAdjust="spacingAndGlyphs" stroke="#48ff48" stroke-width="0.3">22</text>
<text x="455.0" y="281.6" fill="#48ff48" font-size="6.1" class="n" text-anchor="middle" textLength="9.4" lengthAdjust="spacingAndGlyphs" stroke="#48ff48" stroke-width="0.3">178</text>
<line x1="336.6" y1="261.5" x2="352.6" y2="261.5" stroke="#28e628" stroke-width="1.0" class="k"/>
<polygon points="336.6,261.2 339.6,260.3 339.6,262.1" fill="#28e628"/>
<polygon points="352.6,261.2 349.6,262.1 349.6,260.3" fill="#28e628"/>
<text x="345.0" y="260.0" fill="#48ff48" font-size="6.1" class="n" text-anchor="middle" textLength="6.1" lengthAdjust="spacingAndGlyphs" stroke="#48ff48" stroke-width="0.3">12</text>
<line x1="336.6" y1="272.5" x2="533.4" y2="272.5" stroke="#28e628" stroke-width="1.0" class="k"/>
<polygon points="336.6,272.1 339.6,271.2 339.6,273.0" fill="#28e628"/>
<polygon points="376.6,272.1 373.6,273.0 373.6,271.2" fill="#28e628"/>
<polygon points="376.6,272.1 379.6,271.2 379.6,273.0" fill="#28e628"/>
<polygon points="533.4,272.1 530.4,273.0 530.4,271.2" fill="#28e628"/>
<text x="356.8" y="271.1" fill="#48ff48" font-size="6.1" class="n" text-anchor="middle" textLength="6.1" lengthAdjust="spacingAndGlyphs" stroke="#48ff48" stroke-width="0.3">30</text>
<text x="455.0" y="271.1" fill="#48ff48" font-size="6.1" class="n" text-anchor="middle" textLength="9.4" lengthAdjust="spacingAndGlyphs" stroke="#48ff48" stroke-width="0.3">118</text>
<line x1="557.5" y1="261.5" x2="573.5" y2="261.5" stroke="#28e628" stroke-width="1.0" class="k"/>
<polygon points="557.5,261.2 560.5,260.3 560.5,262.1" fill="#28e628"/>
<polygon points="573.5,261.2 570.5,262.1 570.5,260.3" fill="#28e628"/>
<text x="565.6" y="260.0" fill="#48ff48" font-size="6.1" class="n" text-anchor="middle" textLength="6.1" lengthAdjust="spacingAndGlyphs" stroke="#48ff48" stroke-width="0.3">12</text>
<line x1="308.2" y1="293.5" x2="769.8" y2="293.5" stroke="#28e628" stroke-width="1.0" class="k"/>
<polygon points="308.2,293.5 311.2,292.6 311.2,294.4" fill="#28e628"/>
<polygon points="769.8,293.5 766.8,294.4 766.8,292.6" fill="#28e628"/>
<text x="538.8" y="292.6" fill="#48ff48" font-size="6.1" class="n" text-anchor="middle" textLength="9.4" lengthAdjust="spacingAndGlyphs" stroke="#48ff48" stroke-width="0.3">347</text>
<line x1="746.5" y1="246.4" x2="746.5" y2="272.5" stroke="#28e628" stroke-width="1.0" class="k"/>
<line x1="757.5" y1="215.0" x2="757.5" y2="262.0" stroke="#28e628" stroke-width="1.0" class="k"/>
<line x1="769.5" y1="246.4" x2="769.5" y2="294.0" stroke="#28e628" stroke-width="1.0" class="k"/>
<line x1="750.8" y1="261.5" x2="776.0" y2="261.5" stroke="#28e628" stroke-width="1.0" class="k"/>
<polygon points="757.6,261.3 754.6,262.2 754.6,260.4" fill="#28e628"/>
<polygon points="769.8,261.3 772.8,260.4 772.8,262.2" fill="#28e628"/>
<text x="763.9" y="260.2" fill="#48ff48" font-size="6.1" class="n" text-anchor="middle" textLength="8.2" lengthAdjust="spacingAndGlyphs" stroke="#48ff48" stroke-width="0.3">8.5</text>
<line x1="746.4" y1="271.5" x2="769.8" y2="271.5" stroke="#28e628" stroke-width="1.0" class="k"/>
<polygon points="746.4,271.6 749.4,270.7 749.4,272.5" fill="#28e628"/>
<polygon points="769.8,271.6 766.8,272.5 766.8,270.7" fill="#28e628"/>
<text x="758.2" y="270.4" fill="#48ff48" font-size="6.1" class="n" text-anchor="middle" textLength="6.1" lengthAdjust="spacingAndGlyphs" stroke="#48ff48" stroke-width="0.3">17</text>
<rect class="k" x="307.5" y="324.5" width="23.0" height="65.0" fill="none" stroke="#ffffff" stroke-width="1.0" rx="0.8"/>
<rect class="k" x="336.5" y="322.5" width="237.0" height="69.0" fill="none" stroke="#ffffff" stroke-width="1.0"/>
<line x1="330.6" y1="343.5" x2="336.5" y2="343.5" stroke="#ffffff" stroke-width="1.0" class="k"/>
<line x1="330.6" y1="369.5" x2="336.5" y2="369.5" stroke="#ffffff" stroke-width="1.0" class="k"/>
<line x1="330.5" y1="343.5" x2="330.5" y2="369.3" stroke="#f0ee50" stroke-width="1.0" class="k"/>
<line x1="336.5" y1="343.5" x2="336.5" y2="369.3" stroke="#f0ee50" stroke-width="1.0" class="k"/>
<line x1="573.5" y1="343.5" x2="746.5" y2="343.5" stroke="#ffffff" stroke-width="1.0" class="k"/>
<line x1="573.5" y1="369.5" x2="746.5" y2="369.5" stroke="#ffffff" stroke-width="1.0" class="k"/>
<rect class="k" x="746.5" y="324.5" width="23.0" height="65.0" fill="none" stroke="#ffffff" stroke-width="1.0" rx="1.5"/>
<line x1="746.5" y1="343.6" x2="746.5" y2="369.5" stroke="#f0ee50" stroke-width="1.0" class="k"/>
<path class="k" d="M304 356.5 H335 M340 356.5 H345 M350 356.5 H375 M380 356.5 H385 M390 356.5 H414 M419 356.5 H424 M429 356.5 H454 M459 356.5 H464 M469 356.5 H494 M499 356.5 H504 M509 356.5 H534 M539 356.5 H544 M549 356.5 H574 M579 356.5 H584 M589 356.5 H613 M618 356.5 H623 M628 356.5 H653 M658 356.5 H663 M668 356.5 H693 M698 356.5 H703 M708 356.5 H733 M738 356.5 H743 M748 356.5 H776" stroke="#c01420" stroke-width="1" fill="none"/>
<circle cx="372.5" cy="330.5" r="2.9" fill="none" stroke="#ffff58" stroke-width="1.25"/>
<line x1="368.0" y1="330.5" x2="377.2" y2="330.5" stroke="#9a2410" stroke-width="1.0" class="k"/>
<line x1="372.5" y1="325.9" x2="372.5" y2="335.1" stroke="#9a2410" stroke-width="1.0" class="k"/>
<circle cx="372.5" cy="383.5" r="2.9" fill="none" stroke="#ffff58" stroke-width="1.25"/>
<line x1="368.0" y1="383.5" x2="377.2" y2="383.5" stroke="#9a2410" stroke-width="1.0" class="k"/>
<line x1="372.5" y1="378.6" x2="372.5" y2="387.8" stroke="#9a2410" stroke-width="1.0" class="k"/>
<circle cx="537.5" cy="330.5" r="2.9" fill="none" stroke="#ffff58" stroke-width="1.25"/>
<line x1="532.7" y1="330.5" x2="541.9" y2="330.5" stroke="#9a2410" stroke-width="1.0" class="k"/>
<line x1="537.5" y1="325.9" x2="537.5" y2="335.1" stroke="#9a2410" stroke-width="1.0" class="k"/>
<circle cx="537.5" cy="383.5" r="2.9" fill="none" stroke="#ffff58" stroke-width="1.25"/>
<line x1="532.7" y1="383.5" x2="541.9" y2="383.5" stroke="#9a2410" stroke-width="1.0" class="k"/>
<line x1="537.5" y1="378.6" x2="537.5" y2="387.8" stroke="#9a2410" stroke-width="1.0" class="k"/>
<circle cx="455.5" cy="379.5" r="6.2" fill="none" stroke="#ffff58" stroke-width="1.25"/>
<line x1="447.5" y1="379.5" x2="463.5" y2="379.5" stroke="#9a2410" stroke-width="1.0" class="k"/>
<line x1="455.5" y1="371.3" x2="455.5" y2="387.3" stroke="#9a2410" stroke-width="1.0" class="k"/>
<text x="311.0" y="308.2" fill="#48ff48" font-size="5.4" class="n" textLength="47.0" lengthAdjust="spacingAndGlyphs" stroke="#48ff48" stroke-width="0.3">4- M5x0.8px10dp.</text>
<path class="k" d="M311 309.2 H358.5 L370.6 326.8" fill="none" stroke="#28e628" stroke-width="1.0"/>
<polygon points="370.8,327.2 368.4,325.2 369.9,324.2" fill="#28e628"/>
<text x="311.0" y="315.0" fill="#48ff48" font-size="4.8" textLength="25.5" lengthAdjust="spacingAndGlyphs" stroke="#48ff48" stroke-width="0.22">(Both sides)</text>
<line x1="336.5" y1="391.4" x2="336.5" y2="405.5" stroke="#28e628" stroke-width="1.0" class="k"/>
<line x1="372.5" y1="386.5" x2="372.5" y2="405.5" stroke="#28e628" stroke-width="1.0" class="k"/>
<line x1="537.5" y1="386.5" x2="537.5" y2="405.5" stroke="#28e628" stroke-width="1.0" class="k"/>
<line x1="336.5" y1="404.5" x2="537.3" y2="404.5" stroke="#28e628" stroke-width="1.0" class="k"/>
<polygon points="336.5,404.5 339.5,403.6 339.5,405.4" fill="#28e628"/>
<polygon points="372.6,404.5 369.6,405.4 369.6,403.6" fill="#28e628"/>
<polygon points="372.6,404.5 375.6,403.6 375.6,405.4" fill="#28e628"/>
<polygon points="537.3,404.5 534.3,405.4 534.3,403.6" fill="#28e628"/>
<text x="354.5" y="403.4" fill="#48ff48" font-size="6.1" class="n" text-anchor="middle" textLength="6.1" lengthAdjust="spacingAndGlyphs" stroke="#48ff48" stroke-width="0.3">27</text>
<text x="454.5" y="403.4" fill="#48ff48" font-size="6.1" class="n" text-anchor="middle" textLength="9.4" lengthAdjust="spacingAndGlyphs" stroke="#48ff48" stroke-width="0.3">124</text>
<line x1="544.0" y1="330.5" x2="587.6" y2="330.5" stroke="#28e628" stroke-width="1.0" class="k"/>
<line x1="543.0" y1="383.5" x2="587.6" y2="383.5" stroke="#28e628" stroke-width="1.0" class="k"/>
<line x1="587.5" y1="330.5" x2="587.5" y2="383.2" stroke="#28e628" stroke-width="1.0" class="k"/>
<polygon points="587.0,330.5 587.9,333.5 586.1,333.5" fill="#28e628"/>
<polygon points="587.0,383.2 586.1,380.2 587.9,380.2" fill="#28e628"/>
<text x="585.6" y="356.5" fill="#48ff48" font-size="6.1" class="n" text-anchor="middle" textLength="6.1" lengthAdjust="spacingAndGlyphs" transform="rotate(-90 585.6 356.5)" stroke="#48ff48" stroke-width="0.3">40</text>
<rect class="k" x="307.5" y="440.5" width="23.0" height="160.0" fill="none" stroke="#ffffff" stroke-width="1.0"/>
<line x1="330.5" y1="441.0" x2="330.5" y2="600.0" stroke="#f0ee50" stroke-width="1.0" class="k"/>
<rect class="k" x="336.5" y="437.5" width="237.0" height="165.0" fill="none" stroke="#ffffff" stroke-width="1.0"/>
<line x1="336.5" y1="447.0" x2="336.5" y2="593.0" stroke="#f0ee50" stroke-width="1.0" class="k"/>
<line x1="336.5" y1="451.5" x2="573.5" y2="451.5" stroke="#f0ee50" stroke-width="1.0" class="k"/>
<line x1="336.5" y1="458.5" x2="573.5" y2="458.5" stroke="#f0ee50" stroke-width="1.0" class="k"/>
<line x1="336.5" y1="472.5" x2="573.5" y2="472.5" stroke="#f0ee50" stroke-width="1.0" class="k"/>
<line x1="336.5" y1="499.5" x2="573.5" y2="499.5" stroke="#f0ee50" stroke-width="1.0" class="k"/>
<line x1="336.5" y1="541.5" x2="573.5" y2="541.5" stroke="#f0ee50" stroke-width="1.0" class="k"/>
<line x1="336.5" y1="568.5" x2="573.5" y2="568.5" stroke="#f0ee50" stroke-width="1.0" class="k"/>
<line x1="336.5" y1="581.5" x2="573.5" y2="581.5" stroke="#f0ee50" stroke-width="1.0" class="k"/>
<line x1="336.5" y1="589.5" x2="573.5" y2="589.5" stroke="#f0ee50" stroke-width="1.0" class="k"/>
<rect class="k" x="330.5" y="473.5" width="6.0" height="36.0" fill="none" stroke="#ffffff" stroke-width="1.0"/>
<rect class="k" x="330.5" y="531.5" width="6.0" height="35.0" fill="none" stroke="#ffffff" stroke-width="1.0"/>
<line x1="330.6" y1="445.5" x2="336.5" y2="445.5" stroke="#ffffff" stroke-width="1.0" class="k"/>
<line x1="330.6" y1="593.5" x2="336.5" y2="593.5" stroke="#ffffff" stroke-width="1.0" class="k"/>
<line x1="573.5" y1="446.4" x2="573.5" y2="473.5" stroke="#f0ee50" stroke-width="1.0" class="k"/>
<line x1="573.5" y1="566.5" x2="573.5" y2="593.5" stroke="#f0ee50" stroke-width="1.0" class="k"/>
<line x1="573.5" y1="446.5" x2="746.4" y2="446.5" stroke="#ffffff" stroke-width="1.0" class="k"/>
<line x1="573.5" y1="473.5" x2="746.4" y2="473.5" stroke="#ffffff" stroke-width="1.0" class="k"/>
<line x1="573.5" y1="566.5" x2="746.4" y2="566.5" stroke="#ffffff" stroke-width="1.0" class="k"/>
<line x1="573.5" y1="593.5" x2="746.4" y2="593.5" stroke="#ffffff" stroke-width="1.0" class="k"/>
<rect class="k" x="746.5" y="440.5" width="23.0" height="160.0" fill="none" stroke="#ffffff" stroke-width="1.0"/>
<line x1="746.5" y1="446.4" x2="746.5" y2="473.5" stroke="#f0ee50" stroke-width="1.0" class="k"/>
<line x1="746.5" y1="566.5" x2="746.5" y2="593.5" stroke="#f0ee50" stroke-width="1.0" class="k"/>
<path class="k" d="M307.6 600 V634.7 Q307.6 636.7 309.6 636.7 H327.6 L330.6 633.7 V600" fill="none" stroke="#58e4e4" stroke-width="1.0" stroke-dasharray="3 2"/>
<path class="k" d="M746.4 600 V634.7 Q746.4 636.7 748.4 636.7 H767.8 Q769.8 636.7 769.8 634.7 V600" fill="none" stroke="#58e4e4" stroke-width="1.0" stroke-dasharray="3 2"/>
<path class="k" d="M301 460.5 H331 M336 460.5 H341 M346 460.5 H371 M376 460.5 H381 M386 460.5 H411 M416 460.5 H421 M426 460.5 H450 M455 460.5 H460 M465 460.5 H490 M495 460.5 H500 M505 460.5 H530 M535 460.5 H540 M545 460.5 H570 M575 460.5 H580 M585 460.5 H610 M615 460.5 H620 M625 460.5 H649 M654 460.5 H659 M664 460.5 H689 M694 460.5 H699 M704 460.5 H729 M734 460.5 H739 M744 460.5 H776" stroke="#c01420" stroke-width="1" fill="none"/>
<path class="k" d="M304 520.5 H335 M340 520.5 H345 M350 520.5 H375 M380 520.5 H385 M390 520.5 H415 M420 520.5 H425 M430 520.5 H454 M459 520.5 H464 M469 520.5 H494 M499 520.5 H504 M509 520.5 H534 M539 520.5 H544 M549 520.5 H580" stroke="#c01420" stroke-width="1" fill="none"/>
<path class="k" d="M301 580.5 H331 M336 580.5 H341 M346 580.5 H371 M376 580.5 H381 M386 580.5 H411 M416 580.5 H421 M426 580.5 H450 M455 580.5 H460 M465 580.5 H490 M495 580.5 H500 M505 580.5 H530 M535 580.5 H540 M545 580.5 H570 M575 580.5 H580 M585 580.5 H610 M615 580.5 H620 M625 580.5 H649 M654 580.5 H659 M664 580.5 H689 M694 580.5 H699 M704 580.5 H729 M734 580.5 H739 M744 580.5 H776" stroke="#c01420" stroke-width="1" fill="none"/>
<path class="k" d="M364.5 602.5 V635.1 L366 636.6 H379 L380.5 635.1 V602.5" fill="none" stroke="#58e4e4" stroke-width="1.0" stroke-dasharray="3 2"/>
<line x1="334.5" y1="612.5" x2="345.7" y2="612.5" stroke="#58e4e4" stroke-width="1.0" stroke-dasharray="3.5 2" class="k"/>
<line x1="334.5" y1="626.5" x2="345.7" y2="626.5" stroke="#58e4e4" stroke-width="1.0" stroke-dasharray="3.5 2" class="k"/>
<path class="k" d="M334.5 612.5 L331 616.0 M334.5 626.5 L331 623.0 M331 614.0 L333 616.0 M331 625.0 L333 623.0" fill="none" stroke="#58e4e4" stroke-width="1.0"/>
<line x1="334.5" y1="617.0" x2="334.5" y2="622.0" stroke="#58e4e4" stroke-width="1.0" class="k"/>
<rect class="k" x="345.5" y="612.5" width="4.0" height="14.0" fill="none" stroke="#58e4e4" stroke-width="1.0"/>
<line x1="349.8" y1="617.5" x2="358.2" y2="617.5" stroke="#58e4e4" stroke-width="1.0" stroke-dasharray="3 1.5" class="k"/>
<line x1="349.8" y1="621.5" x2="358.2" y2="621.5" stroke="#58e4e4" stroke-width="1.0" stroke-dasharray="3 1.5" class="k"/>
<rect class="k" x="359.5" y="607.5" width="5.0" height="24.0" fill="none" stroke="#58e4e4" stroke-width="1.0"/>
<line x1="359.5" y1="613.5" x2="364.9" y2="613.5" stroke="#58e4e4" stroke-width="1.0" class="k"/>
<line x1="359.5" y1="625.5" x2="364.9" y2="625.5" stroke="#58e4e4" stroke-width="1.0" class="k"/>
<path class="k" d="M359.5 616.5 L357.8 619.5 L359.5 622.5" fill="none" stroke="#58e4e4" stroke-width="1.0"/>
<path class="k" d="M385.0 607.5 H381.5 L380.5 608.5 V630.5 L381.5 631.5 H385.0 L386 630.5 V626.5 L385 625.5 L386.6 624.0 V621.0 L385.4 619.5 L386.6 618.0 V615.0 L385 613.5 L386 612.5 V608.5 Z M380.5 613.5 H385 M380.5 625.5 H385" fill="none" stroke="#58e4e4" stroke-width="1.0"/>
<line x1="386.4" y1="611.0" x2="449" y2="611.0" stroke="#20ffff" stroke-width="2" stroke-dasharray="3 2"/>
<line x1="386.4" y1="628.0" x2="449" y2="628.0" stroke="#20ffff" stroke-width="2" stroke-dasharray="3 2"/>
<path class="k" d="M448.2 611.1 L450.6 613.5 M448.2 627.9 L450.6 625.5" fill="none" stroke="#20ffff" stroke-width="1.6"/>
<line x1="450.5" y1="614.0" x2="450.5" y2="625.0" stroke="#20ffff" stroke-width="2" stroke-dasharray="3 2"/>
<path class="k" d="M452 612.5 H462.5 V626.5 H452" fill="none" stroke="#58e4e4" stroke-width="1.0" stroke-dasharray="3.5 2"/>
<line x1="326.7" y1="619.5" x2="466.0" y2="619.5" stroke="#9c1420" stroke-width="1.0" stroke-dasharray="8 2 2 2" class="k"/>
<line x1="366.5" y1="485.5" x2="386.5" y2="485.5" stroke="#b04a14" stroke-width="1.0" class="k"/>
<line x1="376.5" y1="475.6" x2="376.5" y2="495.6" stroke="#b04a14" stroke-width="1.0" class="k"/>
<circle cx="376.5" cy="485.5" r="7.0" fill="none" stroke="#ffff58" stroke-width="1.25"/>
<circle cx="376.5" cy="485.5" r="4.1" fill="none" stroke="#ffff58" stroke-width="1.25"/>
<circle cx="376.5" cy="485.5" r="1.1" fill="none" stroke="#d81828" stroke-width="1.1"/>
<line x1="366.5" y1="554.5" x2="386.5" y2="554.5" stroke="#b04a14" stroke-width="1.0" class="k"/>
<line x1="376.5" y1="544.9" x2="376.5" y2="564.9" stroke="#b04a14" stroke-width="1.0" class="k"/>
<circle cx="376.5" cy="554.5" r="7.0" fill="none" stroke="#ffff58" stroke-width="1.25"/>
<circle cx="376.5" cy="554.5" r="4.1" fill="none" stroke="#ffff58" stroke-width="1.25"/>
<circle cx="376.5" cy="554.5" r="1.1" fill="none" stroke="#d81828" stroke-width="1.1"/>
<line x1="523.4" y1="485.5" x2="543.4" y2="485.5" stroke="#b04a14" stroke-width="1.0" class="k"/>
<line x1="533.5" y1="475.6" x2="533.5" y2="495.6" stroke="#b04a14" stroke-width="1.0" class="k"/>
<circle cx="533.5" cy="485.5" r="7.0" fill="none" stroke="#ffff58" stroke-width="1.25"/>
<circle cx="533.5" cy="485.5" r="4.1" fill="none" stroke="#ffff58" stroke-width="1.25"/>
<circle cx="533.5" cy="485.5" r="1.1" fill="none" stroke="#d81828" stroke-width="1.1"/>
<line x1="523.4" y1="554.5" x2="543.4" y2="554.5" stroke="#b04a14" stroke-width="1.0" class="k"/>
<line x1="533.5" y1="544.9" x2="533.5" y2="564.9" stroke="#b04a14" stroke-width="1.0" class="k"/>
<circle cx="533.5" cy="554.5" r="7.0" fill="none" stroke="#ffff58" stroke-width="1.25"/>
<circle cx="533.5" cy="554.5" r="4.1" fill="none" stroke="#ffff58" stroke-width="1.25"/>
<circle cx="533.5" cy="554.5" r="1.1" fill="none" stroke="#d81828" stroke-width="1.1"/>
<line x1="310.5" y1="477.5" x2="326.5" y2="477.5" stroke="#b04a14" stroke-width="1.0" class="k"/>
<line x1="318.5" y1="469.8" x2="318.5" y2="485.8" stroke="#b04a14" stroke-width="1.0" class="k"/>
<circle cx="318.5" cy="477.5" r="5.0" fill="none" stroke="#ffff58" stroke-width="1.25"/>
<path d="M323.26 474.75 A5.5 5.5 0 0 1 319.46 482.92" fill="none" stroke="#30d830" stroke-width="1"/>
<line x1="749.5" y1="477.5" x2="765.5" y2="477.5" stroke="#b04a14" stroke-width="1.0" class="k"/>
<line x1="757.5" y1="469.8" x2="757.5" y2="485.8" stroke="#b04a14" stroke-width="1.0" class="k"/>
<circle cx="757.5" cy="477.5" r="5.0" fill="none" stroke="#ffff58" stroke-width="1.25"/>
<path d="M762.26 474.75 A5.5 5.5 0 0 1 758.46 482.92" fill="none" stroke="#30d830" stroke-width="1"/>
<line x1="310.5" y1="562.5" x2="326.5" y2="562.5" stroke="#b04a14" stroke-width="1.0" class="k"/>
<line x1="318.5" y1="554.8" x2="318.5" y2="570.8" stroke="#b04a14" stroke-width="1.0" class="k"/>
<circle cx="318.5" cy="562.5" r="5.0" fill="none" stroke="#ffff58" stroke-width="1.25"/>
<path d="M323.26 559.75 A5.5 5.5 0 0 1 319.46 567.92" fill="none" stroke="#30d830" stroke-width="1"/>
<line x1="749.5" y1="562.5" x2="765.5" y2="562.5" stroke="#b04a14" stroke-width="1.0" class="k"/>
<line x1="757.5" y1="554.8" x2="757.5" y2="570.8" stroke="#b04a14" stroke-width="1.0" class="k"/>
<circle cx="757.5" cy="562.5" r="5.0" fill="none" stroke="#ffff58" stroke-width="1.25"/>
<path d="M762.26 559.75 A5.5 5.5 0 0 1 758.46 567.92" fill="none" stroke="#30d830" stroke-width="1"/>
<line x1="307.5" y1="426.0" x2="307.5" y2="440.8" stroke="#28e628" stroke-width="1.0" class="k"/>
<line x1="318.5" y1="426.0" x2="318.5" y2="471.5" stroke="#28e628" stroke-width="1.0" class="k"/>
<line x1="301.0" y1="426.5" x2="324.0" y2="426.5" stroke="#28e628" stroke-width="1.0" class="k"/>
<polygon points="307.6,426.5 304.6,427.4 304.6,425.6" fill="#28e628"/>
<polygon points="318.5,426.5 321.5,425.6 321.5,427.4" fill="#28e628"/>
<text x="313.5" y="425.3" fill="#48ff48" font-size="6.1" class="n" text-anchor="middle" textLength="8.2" lengthAdjust="spacingAndGlyphs" stroke="#48ff48" stroke-width="0.3">8.5</text>
<line x1="336.5" y1="423.0" x2="336.5" y2="437.7" stroke="#28e628" stroke-width="1.0" class="k"/>
<line x1="376.5" y1="423.0" x2="376.5" y2="478.0" stroke="#28e628" stroke-width="1.0" class="k"/>
<line x1="533.5" y1="423.0" x2="533.5" y2="478.0" stroke="#28e628" stroke-width="1.0" class="k"/>
<line x1="336.5" y1="424.5" x2="533.4" y2="424.5" stroke="#28e628" stroke-width="1.0" class="k"/>
<polygon points="336.5,424.2 339.5,423.3 339.5,425.1" fill="#28e628"/>
<polygon points="376.5,424.2 373.5,425.1 373.5,423.3" fill="#28e628"/>
<polygon points="376.5,424.2 379.5,423.3 379.5,425.1" fill="#28e628"/>
<polygon points="533.4,424.2 530.4,425.1 530.4,423.3" fill="#28e628"/>
<text x="357.0" y="423.2" fill="#48ff48" font-size="6.1" class="n" text-anchor="middle" textLength="6.1" lengthAdjust="spacingAndGlyphs" stroke="#48ff48" stroke-width="0.3">30</text>
<text x="455.3" y="423.2" fill="#48ff48" font-size="6.1" class="n" text-anchor="middle" textLength="9.4" lengthAdjust="spacingAndGlyphs" stroke="#48ff48" stroke-width="0.3">118</text>
<text x="556.4" y="424.2" fill="#48ff48" font-size="5.4" textLength="51.0" lengthAdjust="spacingAndGlyphs" stroke="#48ff48" stroke-width="0.3">4-M6x1.25px12dp.</text>
<path class="k" d="M607 425.3 H554 L536.4 476.5" fill="none" stroke="#28e628" stroke-width="1.0"/>
<polygon points="536.2,477.2 536.3,474.1 538.0,474.6" fill="#28e628"/>
<line x1="283.5" y1="440.5" x2="307.6" y2="440.5" stroke="#28e628" stroke-width="1.0" class="k"/>
<line x1="283.5" y1="600.5" x2="307.6" y2="600.5" stroke="#28e628" stroke-width="1.0" class="k"/>
<line x1="283.5" y1="440.8" x2="283.5" y2="600.0" stroke="#28e628" stroke-width="1.0" class="k"/>
<polygon points="283.5,440.8 284.4,443.8 282.6,443.8" fill="#28e628"/>
<polygon points="283.5,600.0 282.6,597.0 284.4,597.0" fill="#28e628"/>
<text x="282.0" y="520.0" fill="#48ff48" font-size="6.1" class="n" text-anchor="middle" textLength="9.4" lengthAdjust="spacingAndGlyphs" transform="rotate(-90 282.0 520.0)" stroke="#48ff48" stroke-width="0.3">120</text>
<line x1="294.2" y1="477.5" x2="312.0" y2="477.5" stroke="#28e628" stroke-width="1.0" class="k"/>
<line x1="294.2" y1="562.5" x2="312.0" y2="562.5" stroke="#28e628" stroke-width="1.0" class="k"/>
<line x1="294.5" y1="477.8" x2="294.5" y2="562.8" stroke="#28e628" stroke-width="1.0" class="k"/>
<polygon points="294.2,477.8 295.1,480.8 293.3,480.8" fill="#28e628"/>
<polygon points="294.2,562.8 293.3,559.8 295.1,559.8" fill="#28e628"/>
<text x="292.8" y="520.0" fill="#48ff48" font-size="6.1" class="n" text-anchor="middle" textLength="6.1" lengthAdjust="spacingAndGlyphs" transform="rotate(-90 292.8 520.0)" stroke="#48ff48" stroke-width="0.3">64</text>
<line x1="545.0" y1="485.5" x2="588.0" y2="485.5" stroke="#28e628" stroke-width="1.0" class="k"/>
<line x1="545.0" y1="554.5" x2="588.0" y2="554.5" stroke="#28e628" stroke-width="1.0" class="k"/>
<line x1="587.5" y1="485.6" x2="587.5" y2="554.9" stroke="#28e628" stroke-width="1.0" class="k"/>
<polygon points="587.2,485.6 588.1,488.6 586.3,488.6" fill="#28e628"/>
<polygon points="587.2,554.9 586.3,551.9 588.1,551.9" fill="#28e628"/>
<text x="585.8" y="520.5" fill="#48ff48" font-size="6.1" class="n" text-anchor="middle" textLength="6.1" lengthAdjust="spacingAndGlyphs" transform="rotate(-90 585.8 520.5)" stroke="#48ff48" stroke-width="0.3">32</text>
<line x1="757.5" y1="426.0" x2="757.5" y2="469.5" stroke="#28e628" stroke-width="1.0" class="k"/>
<line x1="769.5" y1="426.0" x2="769.5" y2="440.6" stroke="#28e628" stroke-width="1.0" class="k"/>
<line x1="750.8" y1="426.5" x2="776.0" y2="426.5" stroke="#28e628" stroke-width="1.0" class="k"/>
<polygon points="757.5,426.5 754.5,427.4 754.5,425.6" fill="#28e628"/>
<polygon points="769.8,426.5 772.8,425.6 772.8,427.4" fill="#28e628"/>
<text x="763.9" y="425.4" fill="#48ff48" font-size="6.1" class="n" text-anchor="middle" textLength="8.2" lengthAdjust="spacingAndGlyphs" stroke="#48ff48" stroke-width="0.3">8.5</text>
<line x1="766.0" y1="477.5" x2="783.5" y2="477.5" stroke="#28e628" stroke-width="1.0" class="k"/>
<line x1="766.0" y1="562.5" x2="783.5" y2="562.5" stroke="#28e628" stroke-width="1.0" class="k"/>
<line x1="782.5" y1="477.8" x2="782.5" y2="562.8" stroke="#28e628" stroke-width="1.0" class="k"/>
<polygon points="782.6,477.8 783.5,480.8 781.7,480.8" fill="#28e628"/>
<polygon points="782.6,562.8 781.7,559.8 783.5,559.8" fill="#28e628"/>
<text x="781.2" y="520.0" fill="#48ff48" font-size="6.1" class="n" text-anchor="middle" textLength="6.1" lengthAdjust="spacingAndGlyphs" transform="rotate(-90 781.2 520.0)" stroke="#48ff48" stroke-width="0.3">64</text>
</svg>
</body></html>
